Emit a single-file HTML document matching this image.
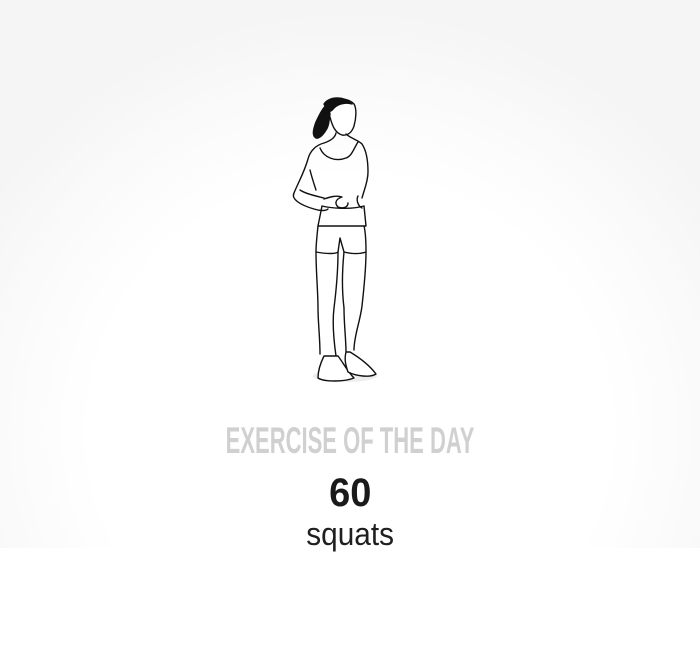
<!DOCTYPE html>
<html><head><style>
html,body{margin:0;padding:0}
body{width:700px;height:654px;position:relative;overflow:hidden;background:#fff;font-family:"Liberation Sans",sans-serif}
.bg{position:absolute;left:0;top:0;width:700px;height:548px;background:radial-gradient(ellipse 430px 420px at 350px 430px,#fff 0%,#fff 60%,#fafafa 82%,#f5f5f5 100%)}
.t{position:absolute;left:0;width:700px;text-align:center;white-space:nowrap}
.t span{display:inline-block}
</style></head><body>
<div class="bg"></div>
<svg style="position:absolute;left:0;top:0" width="700" height="654" viewBox="0 0 700 654">
<ellipse cx="345" cy="376" rx="32" ry="6" fill="#e6e6e6" opacity=".7"/>
<g fill="none" stroke="#111" stroke-width="1.4" stroke-linejoin="round" stroke-linecap="round">
<path d="M326 108c4-10 20-12 28-4 3 5 2 15 0 22-2 6-6 10-12 9-7-2-10-10-12-18z" fill="#fff"/>
<path d="M328 104c-6 4-9 12-12 18-3 8-4 14 0 16 3 1 7-3 10-8 3-4 3-10 4-16z" fill="#111"/>
<path d="M324 104c6-8 20-8 28 0-6-2-14 0-18 4-3 4-6 6-10-4z" fill="#111"/>
<path d="M336 133c-1 5-6 8-12 10-8 2-14 8-16 16-4 14-10 24-14 34-3 6 6 12 20 16 6 2 12 2 14 0"/>
<path d="M346 134c4 4 12 6 16 10 4 6 6 16 6 28 0 10-4 18-6 26"/>
<path d="M320 148c4 10 16 14 26 10 6-2 8-10 12-16"/>
<path d="M310 170c2 8 4 14 6 20M300 190c6 4 16 6 24 8"/>
<path d="M324 199c6-2 12-4 18-2-6 2-8 6-4 10 6 2 10 0 10-4"/>
<path d="M358 196c-2 4 0 10 4 12"/>
<path d="M322 206c8 2 28 4 42 0l2 20-48 0z"/>
<path d="M318 226c-1 10-2 18-2 26 10 2 20 2 22 0l2-14 4 14c8 2 16 2 22 0 0-8 0-18-2-26"/>
<path d="M316 252c0 20 2 40 2 56 0 14 2 30 2 46M338 252c0 20-2 40-4 56-2 16 0 34 2 48"/>
<path d="M344 252c-2 20-2 40 0 56 0 16 2 32 2 44M366 252c0 18-2 36-4 54-2 16-8 30-8 44"/>
<path d="M324 356c-4 8-6 16-6 22 6 4 26 4 36 0-6-6-10-14-16-22z" fill="#fff"/>
<path d="M346 352c-2 8 0 14 2 20 8 4 22 6 28 2-6-8-16-16-26-22z" fill="#fff"/>
</g>
</svg>
<div class="t" style="top:420px;font-size:37px;font-weight:bold;color:#d0d0d0;line-height:42px"><span style="transform:scaleX(.595)">EXERCISE OF THE DAY</span></div>
<div class="t" style="top:472px;font-size:40px;font-weight:bold;color:#1a1a1a;line-height:42px"><span style="transform:scaleX(.95)">60</span></div>
<div class="t" style="top:514px;font-size:32px;color:#1f1f1f;line-height:40px"><span style="transform:scaleX(.93)">squats</span></div>
</body></html>
